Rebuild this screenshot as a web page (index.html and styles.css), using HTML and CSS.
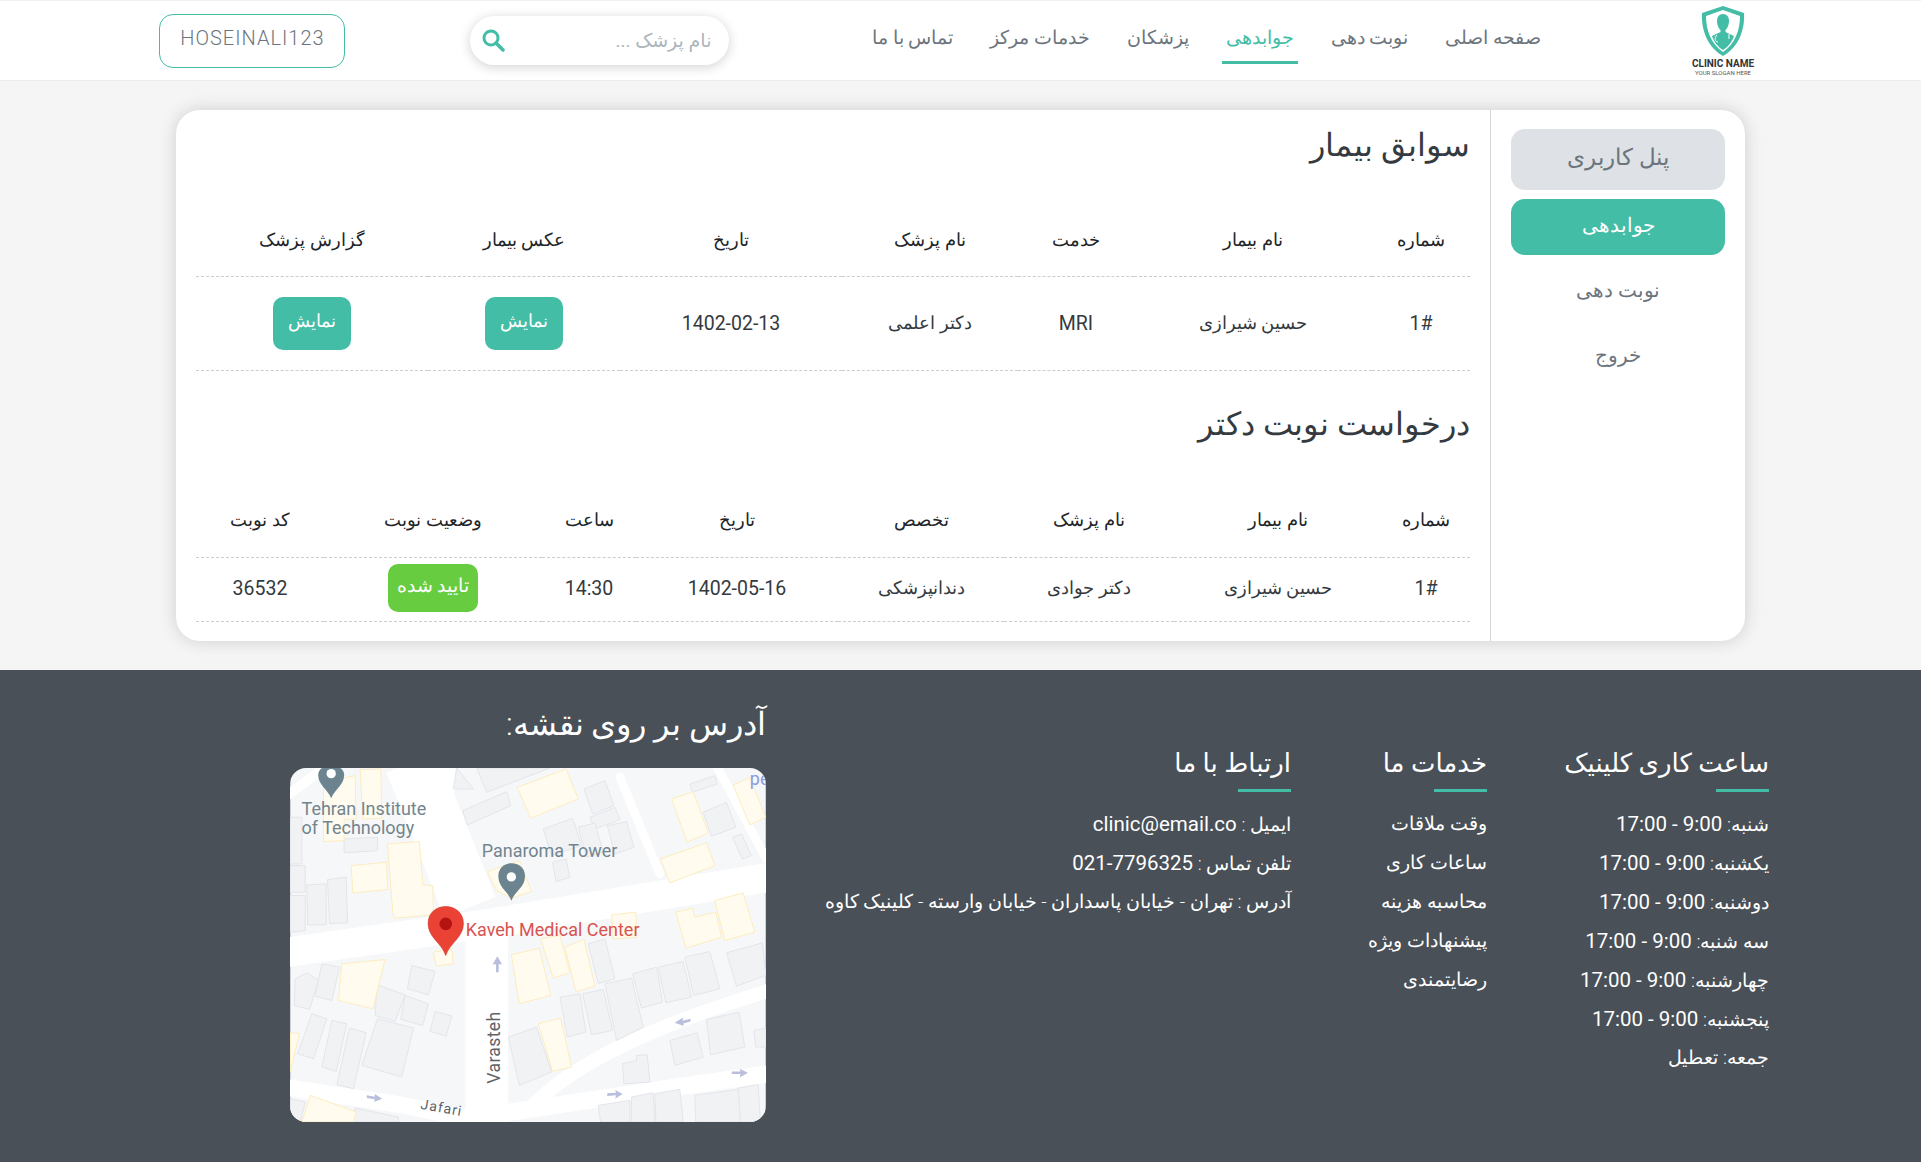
FILE: index.html
```html
<!DOCTYPE html>
<html lang="fa" dir="rtl">
<head>
    <meta charset="UTF-8">
    <meta name="viewport" content="width=device-width, initial-scale=1.0">
    <title>پنل کاربری</title>
    <link rel="stylesheet" href="styles.css">
</head>
<body>
    <header class="site-header">
        <a class="logo" href="#">
            <svg class="logo-mark" viewBox="0 0 44 52" aria-hidden="true">
                <path d="M22 1 L43 8 C44 24 38 42 22 51 C6 42 0 24 1 8 Z" fill="#43bda6"/>
                <path d="M22 5 L39 11 C39 25 34 39 22 47 C10 39 5 25 5 11 Z" fill="#fff"/>
                <path d="M22 9 C26 9 28 12 28 16 C28 20 26 24 24.500 25 L24.500 27 L33 31 C31 37 27 42 22 45 C17 42 13 37 11 31 L19.500 27 L19.500 25 C18 24 16 20 16 16 C16 12 18 9 22 9 Z" fill="#43bda6"/>
                <path d="M16 30 C13 33 14 37 17 37 M28 29 L28 34" fill="none" stroke="#fff" stroke-width="1"/>
            </svg>
            <span class="logo-name">CLINIC NAME</span>
            <span class="logo-slogan">YOUR SLOGAN HERE</span>
        </a>
        <nav class="main-nav">
            <a href="#">صفحه اصلی</a>
            <a href="#">نوبت دهی</a>
            <a href="#" class="active">جوابدهی</a>
            <a href="#">پزشکان</a>
            <a href="#">خدمات مرکز</a>
            <a href="#">تماس با ما</a>
        </nav>
        <form class="search">
            <input type="text" placeholder="نام پزشک ...">
            <svg class="search-icon" viewBox="0 0 24 24" aria-hidden="true">
                <circle cx="10" cy="10" r="7" fill="none" stroke="#43bda6" stroke-width="3"/>
                <path d="M15 15 L22 22" stroke="#43bda6" stroke-width="3.500" stroke-linecap="round"/>
            </svg>
        </form>
        <a class="user-btn" href="#">HOSEINALI123</a>
    </header>

    <main class="page">
        <div class="card">
            <aside class="sidebar">
                <div class="side-title">پنل کاربری</div>
                <a class="side-link active" href="#">جوابدهی</a>
                <a class="side-link" href="#">نوبت دهی</a>
                <a class="side-link" href="#">خروج</a>
            </aside>
            <section class="content">
                <h2>سوابق بیمار</h2>
                <table class="records">
                    <colgroup>
                        <col class="r1"><col class="r2"><col class="r3"><col class="r4"><col class="r5"><col class="r6"><col class="r7">
                    </colgroup>
                    <thead>
                        <tr>
                            <th>شماره</th>
                            <th>نام بیمار</th>
                            <th>خدمت</th>
                            <th>نام پزشک</th>
                            <th>تاریخ</th>
                            <th>عکس بیمار</th>
                            <th>گزارش پزشک</th>
                        </tr>
                    </thead>
                    <tbody>
                        <tr>
                            <td class="num">1#</td>
                            <td>حسین شیرازی</td>
                            <td class="num">MRI</td>
                            <td>دکتر اعلمی</td>
                            <td class="num">1402-02-13</td>
                            <td><a class="btn" href="#">نمایش</a></td>
                            <td><a class="btn" href="#">نمایش</a></td>
                        </tr>
                    </tbody>
                </table>

                <h2>درخواست نوبت دکتر</h2>
                <table class="requests">
                    <colgroup>
                        <col class="q1"><col class="q2"><col class="q3"><col class="q4"><col class="q5"><col class="q6"><col class="q7"><col class="q8">
                    </colgroup>
                    <thead>
                        <tr>
                            <th>شماره</th>
                            <th>نام بیمار</th>
                            <th>نام پزشک</th>
                            <th>تخصص</th>
                            <th>تاریخ</th>
                            <th>ساعت</th>
                            <th>وضعیت نوبت</th>
                            <th>کد نوبت</th>
                        </tr>
                    </thead>
                    <tbody>
                        <tr>
                            <td class="num">1#</td>
                            <td>حسین شیرازی</td>
                            <td>دکتر جوادی</td>
                            <td>دندانپزشکی</td>
                            <td class="num">1402-05-16</td>
                            <td class="num">14:30</td>
                            <td><span class="badge">تایید شده</span></td>
                            <td class="num">36532</td>
                        </tr>
                    </tbody>
                </table>
            </section>
        </div>
    </main>

    <footer class="site-footer">
        <div class="foot-col hours">
            <h4>ساعت کاری کلینیک</h4>
            <ul>
                <li>شنبه: <span class="num">9:00 - 17:00</span></li>
                <li>یکشنبه: <span class="num">9:00 - 17:00</span></li>
                <li>دوشنبه: <span class="num">9:00 - 17:00</span></li>
                <li>سه شنبه: <span class="num">9:00 - 17:00</span></li>
                <li>چهارشنبه: <span class="num">9:00 - 17:00</span></li>
                <li>پنجشنبه: <span class="num">9:00 - 17:00</span></li>
                <li>جمعه: تعطیل</li>
            </ul>
        </div>
        <div class="foot-col services">
            <h4>خدمات ما</h4>
            <ul>
                <li>وقت ملاقات</li>
                <li>ساعات کاری</li>
                <li>محاسبه هزینه</li>
                <li>پیشنهادات ویژه</li>
                <li>رضایتمندی</li>
            </ul>
        </div>
        <div class="foot-col contact">
            <h4>ارتباط با ما</h4>
            <ul>
                <li>ایمیل : <span class="num" dir="ltr">clinic@email.co</span></li>
                <li>تلفن تماس : <span class="num" dir="ltr">021-7796325</span></li>
                <li>آدرس : تهران - خیابان پاسداران - خیابان وارسته - کلینیک کاوه</li>
            </ul>
        </div>
        <div class="foot-map">
            <h3>آدرس بر روی نقشه:</h3>
            <!-- map coords are in 3x pixels, same as the crop I measured them on -->
            <svg class="map" viewBox="60 57 1428 1063">
                <rect x="60" y="57" width="1428" height="1063" fill="#f6f7f9"/>

                <g fill="none" stroke="#fff" stroke-linecap="round" stroke-linejoin="round">
                    <path d="M40 612 L650 525 L1500 385" stroke-width="88"/>
                    <path d="M425 40 L600 475" stroke-width="165" stroke-linecap="butt"/>
                    <path d="M650 500 L650 1130" stroke-width="128" stroke-linecap="butt"/>
                    <path d="M40 1015 L400 1070 L640 1120" stroke-width="50"/>
                    <path d="M690 1095 L1220 1015 L1500 975" stroke-width="52"/>
                    <path d="M780 1080 C900 950 1150 830 1500 725" stroke-width="42"/>
                    <path d="M1050 85 L1170 375" stroke-width="26"/>
                    <path d="M1340 50 L1490 330" stroke-width="26"/>
                    <path d="M50 140 L145 70" stroke-width="30"/>
                    <path d="M540 50 L540 120" stroke-width="32"/>
                </g>

                <g fill="#f1f2f4" stroke="#e3e5ea" stroke-width="3">
                    <path d="M560 57 L610 120 L550 120 Z"/>
                    <path d="M620 57 L840 57 L650 130 Z"/>
                    <path d="M578 185 L710 128 L722 170 L592 228 Z"/>
                    <path d="M942 120 L1005 95 L1032 170 L968 195 Z"/>
                    <path d="M960 205 L1035 175 L1050 212 L975 240 Z"/>
                    <path d="M820 240 L908 208 L935 290 L845 320 Z"/>
                    <path d="M925 235 L975 222 L1000 310 L950 325 Z"/>
                    <path d="M1012 230 L1070 218 L1092 295 L1035 315 Z"/>
                    <path d="M848 340 L888 330 L900 385 L858 398 Z"/>
                    <path d="M1300 190 L1370 160 L1398 235 L1325 262 Z"/>
                    <path d="M1260 105 L1335 80 L1342 105 L1268 130 Z"/>
                    <path d="M1388 265 L1415 255 L1445 320 L1418 330 Z"/>
                    <path d="M60 205 L95 205 L95 345 L60 345 Z"/>
                    <path d="M60 350 L105 350 L105 430 L60 430 Z"/>
                    <path d="M60 440 L105 440 L105 545 L60 550 Z"/>
                    <path d="M110 408 L168 405 L168 528 L112 528 Z"/>
                    <path d="M172 392 L228 385 L232 522 L178 524 Z"/>
                    <path d="M222 270 L322 265 L322 305 L222 312 Z"/>
                    <path d="M75 690 L110 672 L145 695 L118 782 L72 770 Z"/>
                    <path d="M155 645 L208 655 L185 755 L135 742 Z"/>
                    <path d="M125 795 L170 810 L130 930 L82 915 Z"/>
                    <path d="M185 815 L230 825 L198 968 L155 955 Z"/>
                    <path d="M238 838 L288 852 L250 1020 L200 1008 Z"/>
                    <path d="M320 708 L405 738 L375 818 L315 800 Z"/>
                    <path d="M405 740 L475 765 L458 830 L392 812 Z"/>
                    <path d="M425 650 L495 668 L475 738 L412 720 Z"/>
                    <path d="M322 810 L430 838 L395 985 L275 950 Z"/>
                    <path d="M495 788 L545 802 L528 862 L480 848 Z"/>
                    <path d="M955 585 L1005 570 L1035 690 L985 705 Z"/>
                    <path d="M870 745 L930 735 L948 850 L892 865 Z"/>
                    <path d="M938 735 L1000 722 L1028 845 L965 858 Z"/>
                    <path d="M1005 705 L1085 688 L1120 835 L1040 875 Z"/>
                    <path d="M1088 675 L1160 655 L1178 760 L1115 778 Z"/>
                    <path d="M1165 655 L1240 638 L1265 745 L1188 762 Z"/>
                    <path d="M1245 625 L1320 608 L1350 720 L1272 740 Z"/>
                    <path d="M1370 612 L1478 582 L1488 680 L1400 712 Z"/>
                    <path d="M715 865 L800 835 L845 970 L748 1010 Z"/>
                    <path d="M1200 875 L1282 852 L1300 925 L1215 950 Z"/>
                    <path d="M1310 812 L1408 790 L1425 895 L1322 918 Z"/>
                    <path d="M1452 845 L1488 838 L1488 895 L1458 895 Z"/>
                    <path d="M1058 945 L1100 935 L1100 920 L1132 918 L1140 1000 L1062 1005 Z"/>
                    <path d="M985 1070 L1080 1055 L1080 1120 L992 1120 Z"/>
                    <path d="M1085 1045 L1150 1032 L1155 1120 L1085 1120 Z"/>
                    <path d="M1155 1035 L1230 1022 L1240 1120 L1158 1120 Z"/>
                    <path d="M1275 1040 L1405 1022 L1415 1120 L1278 1120 Z"/>
                    <path d="M1405 1018 L1465 1008 L1472 1120 L1412 1120 Z"/>
                    <path d="M60 1050 L105 1060 L90 1120 L60 1120 Z"/>
                    <path d="M255 1078 L385 1105 L385 1120 L240 1120 Z"/>
                </g>

                <g fill="#fffbee" stroke="#fdecbf" stroke-width="3">
                    <path d="M160 100 L255 80 L258 210 L222 212 L222 275 L160 278 Z"/>
                    <path d="M270 62 L332 60 L335 208 L278 210 Z"/>
                    <path d="M243 350 L350 340 L352 422 L248 432 Z"/>
                    <path d="M352 285 L448 278 L458 408 L488 410 L490 498 L372 508 L368 490 Z"/>
                    <path d="M742 115 L888 60 L925 150 L782 208 Z"/>
                    <path d="M1205 150 L1270 128 L1315 252 L1252 280 Z"/>
                    <path d="M1390 108 L1440 85 L1488 205 L1440 228 Z"/>
                    <path d="M1172 330 L1310 282 L1335 350 L1200 402 Z"/>
                    <path d="M652 368 L748 335 L785 428 L725 448 L680 425 Z"/>
                    <path d="M1025 498 L1098 490 L1100 565 L1030 570 Z"/>
                    <path d="M1218 490 L1268 478 L1275 505 L1338 490 L1355 565 L1248 598 Z"/>
                    <path d="M1335 455 L1420 432 L1455 550 L1365 575 Z"/>
                    <path d="M490 610 L545 600 L550 645 L498 652 Z"/>
                    <path d="M724 618 L808 598 L842 740 L748 765 Z"/>
                    <path d="M812 570 L870 560 L900 672 L850 688 Z"/>
                    <path d="M885 595 L942 572 L975 712 L918 728 Z"/>
                    <path d="M215 645 L345 632 L308 780 L205 755 Z"/>
                    <path d="M805 825 L872 808 L905 955 L848 968 Z"/>
                    <path d="M60 852 L88 855 L60 970 Z"/>
                    <path d="M120 1040 L258 1090 L250 1120 L95 1120 Z"/>
                </g>

                <g fill="#b9bfdc">
                    <path d="M682 622 L696 646 L686 646 L686 670 L678 670 L678 646 L668 646 Z"/>
                    <path d="M1214 822 L1240 806 L1238 816 L1262 810 L1262 818 L1240 824 L1242 832 Z"/>
                    <path d="M1434 972 L1410 960 L1412 968 L1386 968 L1386 976 L1412 976 L1410 986 Z"/>
                    <path d="M1058 1036 L1036 1024 L1038 1032 L1012 1034 L1012 1042 L1038 1040 L1036 1050 Z"/>
                    <path d="M336 1050 L314 1036 L314 1044 L290 1040 L290 1048 L314 1052 L312 1060 Z"/>
                </g>

                <g class="map-label">
                    <text x="94" y="198">Tehran Institute</text>
                    <text x="94" y="255">of Technology</text>
                    <text x="635" y="324">Panaroma Tower</text>
                </g>
                <text class="map-street" transform="translate(690 1005) rotate(-90)">Varasteh</text>
                <text class="map-street small" transform="translate(450 1080) rotate(10)">Jafari</text>
                <text class="map-link" x="1440" y="108">pe</text>

                <path d="M183 148 C172 120 144 108 144 78 C144 40 222 40 222 78 C222 108 194 120 183 148 Z" fill="#6c8490"/>
                <circle cx="183" cy="74" r="14" fill="#fff"/>
                <path d="M724 456 C714 426 685 416 685 382 C685 330 765 330 765 382 C765 416 734 426 724 456 Z" fill="#6c8490"/>
                <circle cx="724" cy="384" r="14" fill="#fff"/>

                <path d="M527 620 C515 582 474 566 474 524 C474 456 580 456 580 524 C580 566 539 582 527 620 Z" fill="#ea4335" stroke="#d03a2d" stroke-width="2"/>
                <circle cx="527" cy="525" r="19" fill="#b3140f"/>
                <text class="map-place" x="587" y="561">Kaveh Medical Center</text>
            </svg>
        </div>
    </footer>
</body>
</html>
```

FILE: styles.css
```css
* {
    box-sizing: border-box;
}
body {
    margin: 0;
    background-color: #f5f5f5;
    font-family: Roboto, "DejaVu Sans", sans-serif;
    font-size: 16px;
    color: #212529;
}
a {
    text-decoration: none;
    color: inherit;
}
ul {
    list-style: none;
    margin: 0;
    padding: 0;
}

/* Header */
.site-header {
    display: flex;
    align-items: center;
    height: 81px;
    padding-right: 167px;
    background-color: #fff;
    border-top: 1px solid #f0f0f0;
    border-bottom: 1px solid #ececec;
}
.logo {
    display: flex;
    flex-direction: column;
    align-items: center;
    width: 62px;
    margin-left: 147px;
    direction: ltr;
}
.logo-mark {
    width: 44px;
    height: 52px;
    margin-bottom: 1px;
}
.logo-name {
    font-size: 10px;
    font-weight: 700;
    line-height: 11px;
    color: #333;
    white-space: nowrap;
}
.logo-slogan {
    font-size: 6px;
    line-height: 7px;
    color: #555;
    white-space: nowrap;
}
.main-nav {
    display: flex;
    gap: 29px;
    margin-left: 139px;
}
.main-nav a {
    padding: 9px 4px 12px;
    font-size: 18.500px;
    font-weight: 300;
    color: #6c757d;
    border-bottom: 3px solid transparent;
}
.main-nav a.active {
    color: #43bda6;
    border-bottom-color: #43bda6;
}
.search {
    position: relative;
    width: 259px;
    height: 49px;
    margin-left: 125px;
}
.search input {
    width: 100%;
    height: 100%;
    padding: 0 18px 0 50px;
    border: none;
    border-radius: 25px;
    background-color: #fff;
    box-shadow: 0 2px 12px rgba(0, 0, 0, 0.18);
    font-family: inherit;
    font-size: 19px;
    outline: none;
}
.search input::placeholder {
    color: #adb5bd;
}
.search-icon {
    position: absolute;
    left: 11px;
    top: 12px;
    width: 24px;
    height: 24px;
}
.user-btn {
    width: 186px;
    height: 54px;
    line-height: 46px;
    border: 1px solid #43bda6;
    border-radius: 14px;
    text-align: center;
    font-size: 20px;
    font-weight: 300;
    letter-spacing: 1px;
    color: #6c757d;
}

/* Panel card */
.page {
    padding: 29px 176px;
}
.card {
    display: flex;
    height: 531px;
    background-color: #fff;
    border-radius: 24px;
    box-shadow: 0 0 18px rgba(0, 0, 0, 0.16);
}
.sidebar {
    flex: 0 0 255px;
    padding: 19px 20px 0 20px;
    border-left: 1px solid #d5d5d5;
}
.side-title {
    height: 61px;
    margin-bottom: 9px;
    line-height: 58px;
    border-radius: 14px;
    background-color: #dee2e6;
    text-align: center;
    font-size: 23px;
    font-weight: 300;
    color: #6c757d;
}
.side-link {
    display: block;
    height: 56px;
    margin-bottom: 9px;
    line-height: 53px;
    border-radius: 14px;
    text-align: center;
    font-size: 19.500px;
    font-weight: 300;
    color: #6c757d;
}
.side-link.active {
    background-color: #43bda6;
    color: #fff;
}
.content {
    flex: 1;
    padding: 13px 20px 0;
}
.content h2 {
    margin: 0;
    height: 48px;
    line-height: 45px;
    font-size: 32px;
    font-weight: 300;
    color: #343a40;
}
table {
    width: 100%;
    border-collapse: collapse;
    table-layout: fixed;
    text-align: center;
    font-size: 18px;
}
th {
    font-weight: 300;
    color: #212529;
    border-bottom: 1px dashed #ccc;
}
td {
    font-weight: 300;
    font-size: 17.500px;
    color: #343a40;
    border-bottom: 1px dashed #ccc;
}
td.num {
    font-size: 19.500px;
    font-weight: 400;
}
.records {
    margin: 33px 0 31px;
}
.records th {
    height: 72px;
}
.records td {
    height: 94px;
}
.requests {
    margin-top: 32px;
}
.requests th {
    height: 76px;
}
.requests td {
    height: 64px;
    padding-bottom: 4px;
}
.r1 { width: 98px; }
.r2 { width: 238px; }
.r3 { width: 116px; }
.r4 { width: 176px; }
.r5 { width: 222px; }
.r6 { width: 192px; }
.r7 { width: 232px; }
.q1 { width: 88px; }
.q2 { width: 208px; }
.q3 { width: 170px; }
.q4 { width: 166px; }
.q5 { width: 202px; }
.q6 { width: 94px; }
.q7 { width: 218px; }
.q8 { width: 128px; }
.btn {
    display: inline-block;
    width: 78px;
    height: 53px;
    line-height: 48px;
    border-radius: 10px;
    background-color: #43bda6;
    color: #fff;
    font-size: 18px;
}
.badge {
    display: inline-block;
    width: 90px;
    height: 48px;
    line-height: 44px;
    border-radius: 10px;
    background-color: #67cc3f;
    color: #fff;
    font-size: 19px;
}

/* Footer */
.site-footer {
    display: flex;
    align-items: flex-start;
    height: 492px;
    margin-top: 0;
    padding-right: 152px;
    background-color: #495057;
    color: #fff;
}
.foot-col {
    padding-top: 74px;
}
.foot-col h4 {
    position: relative;
    margin: 0 0 12px;
    height: 48px;
    line-height: 38px;
    font-size: 26px;
    font-weight: 400;
}
.foot-col h4::after {
    content: "";
    position: absolute;
    right: 0;
    bottom: 0;
    width: 53px;
    height: 3px;
    background-color: #43bda6;
}
.foot-col li {
    height: 39px;
    line-height: 40px;
    font-size: 19px;
    font-weight: 300;
    white-space: nowrap;
}
.foot-col .num {
    font-size: 20.500px;
    font-weight: 400;
}
.hours {
    width: 282px;
}
.services {
    width: 196px;
}
.contact {
    width: 525px;
}
.foot-map {
    width: 476px;
    padding-top: 32px;
}
.foot-map h3 {
    margin: 0 0 19px;
    height: 47px;
    line-height: 45px;
    font-size: 32px;
    font-weight: 300;
}
.map {
    display: block;
    width: 476px;
    height: 354px;
    border-radius: 16px;
    direction: ltr;
}
.map-label text,
.map-street,
.map-place,
.map-link {
    font-family: Roboto, sans-serif;
}
.map-label text {
    font-size: 54px;
    fill: #72858f;
}
.map-street {
    font-size: 53px;
    fill: #5f6368;
    letter-spacing: 1px;
}
.map-street.small {
    font-size: 42px;
    letter-spacing: 3px;
}
.map-place {
    font-size: 54px;
    fill: #d9534f;
}
.map-link {
    font-size: 54px;
    fill: #8c9be0;
}
```
